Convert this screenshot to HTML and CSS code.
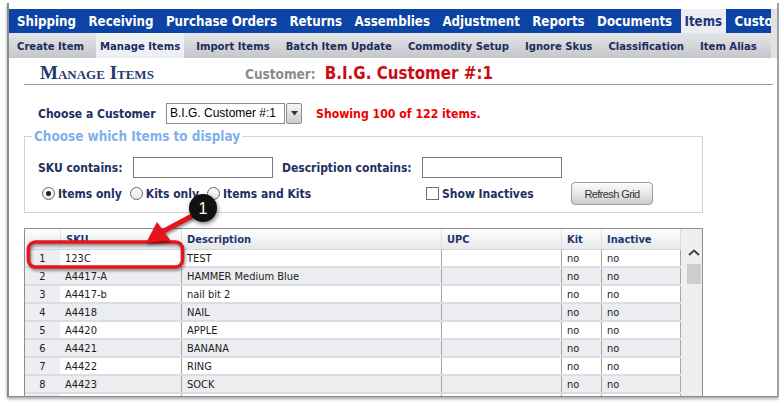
FILE: index.html
```html
<!DOCTYPE html>
<html lang="en">
<head>
<meta charset="utf-8">
<title>Manage Items</title>
<link rel="stylesheet" href="styles.css">
</head>
<body>
<div class="frame">
  <div class="bars">
    <nav class="topnav">
      <a>Shipping</a><a>Receiving</a><a>Purchase Orders</a><a>Returns</a><a>Assemblies</a><a>Adjustment</a><a>Reports</a><a>Documents</a><a class="active">Items</a><a>Customers</a>
    </nav>
    <nav class="subnav">
      <a>Create Item</a><a class="active">Manage Items</a><a>Import Items</a><a>Batch Item Update</a><a>Commodity Setup</a><a>Ignore Skus</a><a>Classification</a><a>Item Alias</a>
    </nav>
  </div>
  <main class="content">
    <div class="titlebar">
      <h1 class="title">Manage Items</h1>
      <div class="cust"><span class="cust-label">Customer:</span><span class="cust-name">B.I.G. Customer #:1</span></div>
    </div>
    <div class="choose">
      <span class="label choose-label">Choose a Customer</span>
      <span class="select">B.I.G. Customer #:1</span>
      <span class="select-btn"><svg width="7" height="5" viewBox="0 0 7 5"><path d="M0 0h7L3.5 4.5z" fill="#333"/></svg></span>
      <span class="showing">Showing 100 of 122 items.</span>
    </div>
    <fieldset class="filters">
      <legend>Choose which Items to display</legend>
      <div class="frow">
        <span class="label sku-label">SKU contains:</span><span class="textbox"></span>
        <span class="label desc-label">Description contains:</span><span class="textbox"></span>
      </div>
      <div class="frow2">
        <div class="radios">
          <span class="radio checked"></span><span class="label opt">Items only</span>
          <span class="radio"></span><span class="label opt">Kits only</span>
          <span class="radio"></span><span class="label opt">Items and Kits</span>
        </div>
        <div class="inact"><span class="check"></span><span class="label">Show Inactives</span></div>
        <button class="refresh">Refresh Grid</button>
      </div>
    </fieldset>
    <div class="grid">
      <div class="gtable">
        <div class="row head"><span></span><span>SKU</span><span>Description</span><span>UPC</span><span>Kit</span><span>Inactive</span></div>
        <div class="row"><span class="num">1</span><span>123C</span><span>TEST</span><span></span><span>no</span><span>no</span></div>
        <div class="row alt"><span class="num">2</span><span>A4417-A</span><span>HAMMER Medium Blue</span><span></span><span>no</span><span>no</span></div>
        <div class="row"><span class="num">3</span><span>A4417-b</span><span>nail bit 2</span><span></span><span>no</span><span>no</span></div>
        <div class="row alt"><span class="num">4</span><span>A4418</span><span>NAIL</span><span></span><span>no</span><span>no</span></div>
        <div class="row"><span class="num">5</span><span>A4420</span><span>APPLE</span><span></span><span>no</span><span>no</span></div>
        <div class="row alt"><span class="num">6</span><span>A4421</span><span>BANANA</span><span></span><span>no</span><span>no</span></div>
        <div class="row"><span class="num">7</span><span>A4422</span><span>RING</span><span></span><span>no</span><span>no</span></div>
        <div class="row alt"><span class="num">8</span><span>A4423</span><span>SOCK</span><span></span><span>no</span><span>no</span></div>
        <div class="row"><span class="num"></span><span></span><span></span><span></span><span></span><span></span></div>
      </div>
      <div class="vscroll">
        <svg class="chev" width="14" height="7" viewBox="0 0 14 7"><path d="M2 6L7 1.5L12 6" fill="none" stroke="#444" stroke-width="2"/></svg>
        <div class="thumb"></div>
      </div>
    </div>
  </main>
</div>
<svg class="callout" width="779" height="402" viewBox="0 0 779 402">
  <rect class="ring" x="28.5" y="242" width="154" height="25" rx="7" ry="7" fill="none" stroke="#e5151b" stroke-width="3.5"/>
  <g class="arrow">
    <path d="M192 216L160 233" stroke="#e5151b" stroke-width="5" stroke-linecap="round" fill="none"/>
    <path d="M146 243L157 222L170 240z" fill="#e5151b"/>
  </g>
  <circle class="badge" cx="203" cy="208" r="14" fill="#111"/>
  <text x="203" y="214" text-anchor="middle" class="badge-num">1</text>
</svg>
</body>
</html>
```
FILE: styles.css
```css
* { box-sizing: border-box; }
html, body { margin: 0; padding: 0; background: #fff; }
body {
  position: relative;
  width: 779px;
  height: 402px;
  overflow: hidden;
  padding-top: 3px;
  font-family: "DejaVu Sans Condensed", "DejaVu Sans", sans-serif;
  font-stretch: condensed;
  color: #1e2f5f;
}
.frame {
  margin: 0 0 0 7px;
  width: 772px;
  height: 394px;
  padding-top: 6px;
  border-left: 2px solid #8c8c8c;
  border-right: 2px solid #a0a0a0;
  border-bottom: 1px solid #8a8a8a;
  box-shadow: 0 2px 3px rgba(0,0,0,.35);
  overflow: hidden;
  background: #fff;
}
.bars { background: #e2e2e2; }
.topnav {
  display: flex;
  height: 24px;
  margin-right: 6px;
  padding-left: 4px;
  background: #0b44a4;
  overflow: hidden;
  white-space: nowrap;
}
.topnav a {
  padding: 0 4px;
  margin-right: 4.4px;
  color: #fff;
  font-weight: bold;
  font-size: 13.2px;
  line-height: 25px;
}
.topnav a.active { background: #eceef3; color: #1f3575; }
.subnav {
  display: flex;
  gap: 8px;
  height: 25px;
  margin-right: 6px;
  padding-left: 4px;
  background: linear-gradient(#e4e5e8, #c6c7cb);
  white-space: nowrap;
  overflow: hidden;
}
.subnav a {
  padding: 0 4px;
  color: #1d2c5c;
  font-weight: bold;
  font-size: 11.2px;
  line-height: 27px;
}
.subnav a.active { background: #eff0f4; }
.content { padding: 0 4px 0 15px; }
.titlebar {
  display: flex;
  align-items: baseline;
  height: 27px;
  padding: 3px 0 0 16px;
  border-bottom: 1px solid #9a9a9a;
}
.title {
  margin: 0;
  width: 205px;
  font-family: "Liberation Serif", serif;
  font-variant: small-caps;
  font-weight: bold;
  font-size: 19px;
  line-height: 23px;
  color: #1f3a6e;
}
.cust-label { color: #8b8b8b; font-weight: bold; font-size: 13.5px; margin-right: 9px; }
.cust-name { color: #cc0a14; font-weight: bold; font-size: 16.8px; }
.label { font-weight: bold; font-size: 12px; color: #1e2f5f; white-space: nowrap; }
.choose {
  display: flex;
  align-items: center;
  height: 21px;
  margin-top: 18px;
  padding-left: 14px;
}
.choose-label { width: 128px; }
.select {
  width: 119px;
  height: 21px;
  padding-left: 3px;
  border: 1px solid #8d8d8d;
  font-family: "Liberation Sans", sans-serif;
  font-size: 12px;
  line-height: 19px;
  color: #000;
}
.select-btn {
  display: flex;
  align-items: center;
  justify-content: center;
  width: 16px;
  height: 21px;
  margin-left: 1px;
  border: 1px solid #8a8a8a;
  border-radius: 2px;
  background: linear-gradient(#f6f6f6, #cdcdcd);
}
.showing { margin-left: 14px; color: #ee0000; font-weight: bold; font-size: 12.2px; }
.filters {
  margin: 5px 0 0 0;
  width: 679px;
  min-width: 0;
  padding: 13px 0 7px 0;
  border: 1px solid #d2d2d2;
}
.filters legend {
  margin-left: 7px;
  padding: 0 2px;
  font-weight: bold;
  font-size: 13.4px;
  line-height: 15px;
  color: #7fb0ee;
}
.frow { display: flex; align-items: center; height: 21px; padding-left: 13px; }
.sku-label { width: 95px; }
.desc-label { width: 140px; margin-left: 9px; }
.textbox { width: 140px; height: 21px; border: 1px solid #7a7a7a; background: #fff; }
.frow2 { display: flex; align-items: center; height: 23px; margin-top: 4px; padding-left: 13px; }
.radios { display: flex; align-items: center; width: 388px; padding-left: 4px; }
.radio {
  position: relative;
  width: 13px;
  height: 13px;
  margin-right: 3px;
  border: 1px solid #666;
  border-radius: 50%;
  background: linear-gradient(#fdfdfd, #e8e8e8);
}
.radio.checked::after {
  content: "";
  position: absolute;
  left: 3px;
  top: 3px;
  width: 5px;
  height: 5px;
  border-radius: 50%;
  background: #222;
}
.opt { margin-right: 8px; }
.inact { display: flex; align-items: center; width: 145px; }
.check { width: 13px; height: 13px; margin-right: 3px; border: 1px solid #707070; background: #fff; }
.refresh {
  width: 82px;
  height: 23px;
  padding: 0;
  border: 1px solid #9b9b9b;
  border-radius: 4px;
  background: linear-gradient(#fbfbfb, #e8e8e8 50%, #cbcbcb);
  font-family: "Liberation Sans", sans-serif;
  font-size: 11px;
  letter-spacing: -0.6px;
  color: #333;
}
.grid {
  display: flex;
  width: 679px;
  margin-top: 15px;
  border: 1px solid #8e8e8e;
}
.gtable { width: 656px; }
.row {
  display: grid;
  grid-template-columns: 35px 121px 260px 120px 40px 80px;
  height: 18px;
  border-bottom: 2px solid #dcdde0;
  background: #fff;
}
.row.alt { background: #ecedf0; }
.row > span {
  padding-left: 5px;
  font-size: 11px;
  line-height: 17px;
  color: #1c1c1c;
  white-space: nowrap;
  overflow: hidden;
}
.row > span:nth-child(n+3) { border-left: 1px solid #a6a6a6; }
.row > span:last-child { border-right: 1px solid #a6a6a6; }
.row > .num { padding-left: 0; text-align: center; background: #eceef1; }
.row.head {
  height: 21px;
  border-bottom: 1px solid #d6d6d6;
  background: linear-gradient(#ffffff, #e7e8eb);
}
.row.head > span {
  font-weight: bold;
  color: #1f3570;
  line-height: 21px;
  border-left: 1px solid #dedede;
}
.row.head > span:first-child { border-left: 0; }
.row.head > span:last-child { border-right: 1px solid #dedede; }
.vscroll { width: 21px; background: #efefef; padding: 20px 0 0 6px; }
.chev { display: block; }
.thumb { width: 14px; height: 20px; margin-top: 8px; background: #cdcdcd; }
.callout { position: absolute; left: 0; top: 0; pointer-events: none; }
.ring, .arrow { filter: drop-shadow(1px 2px 1.5px rgba(0,0,0,.45)); }
.badge { filter: drop-shadow(1px 2px 2px rgba(0,0,0,.5)); }
.badge-num { font-family: "Liberation Sans", sans-serif; font-size: 16px; fill: #fff; }
```
